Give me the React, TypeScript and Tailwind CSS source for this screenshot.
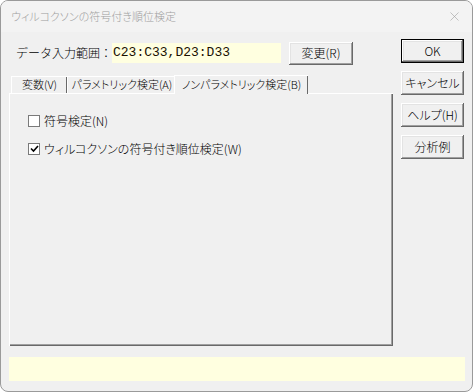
import * as React from 'react'
import {X} from 'lucide-react'

const jp = "[font-family:'Noto_Sans_CJK_JP',sans-serif] [font-feature-settings:'palt'] font-light"

const raised =
  'shadow-[inset_-1px_-1px_#696969,inset_1px_1px_#ffffff,inset_-2px_-2px_#a0a0a0,inset_2px_2px_#e3e3e3]'

const Button = ({label, def = false, className = ''}: {label: string; def?: boolean; className?: string}) => (
  <div
    className={`flex items-center justify-center bg-[#f0f0f0] text-[12px] text-black ${
      def ? 'border border-black' : ''
    } ${className}`}
  >
    <div className={`w-full h-full flex items-center justify-center ${raised}`}>{label}</div>
  </div>
)

const Tab = ({label, width, selected = false}: {label: string; width: string; selected?: boolean}) => (
  <div
    className={`${width} flex items-start justify-center whitespace-nowrap text-[11px] text-black bg-[#f0f0f0] border-t border-l border-white shadow-[inset_-1px_0_#696969] ${
      selected ? 'h-[19px] pt-[2px] relative z-10 mb-[-1px] -ml-[2px]' : 'h-[17px] pt-[1px]'
    }`}
  >
    <span className="leading-[13px]">{label}</span>
  </div>
)

const Check = ({label, checked}: {label: string; checked: boolean}) => (
  <div className="flex items-center h-[14px]">
    <div className="w-[12px] h-[12px] bg-white border border-[#7a7a7a] flex items-center justify-center">
      {checked && (
        <svg width="9" height="8" viewBox="0 0 9 8">
          <path d="M1 3.5 L3.5 6 L8 1" stroke="#000" strokeWidth="1.6" fill="none" />
        </svg>
      )}
    </div>
    <span className="ml-[4px] text-[12px] text-black leading-[14px]">{label}</span>
  </div>
)

export default function App() {
  return (
    <div
      className={`w-[473px] h-[392px] bg-[#f0f0f0] border border-[#9a9a9a] rounded-[8px] flex flex-col overflow-hidden ${jp}`}
    >
      <div className="h-[31px] flex items-center justify-between pl-[10px] pr-[10px] bg-[#f3f3f3]">
        <span className="text-[11px] text-[#a0a0a0]">ウィルコクソンの符号付き順位検定</span>
        <X size={15} strokeWidth={1} color="#a0a0a0" />
      </div>

      <div className="flex pl-[8px] pt-[9px]">
        <div className="w-[384px] flex flex-col">
          <div className="flex items-center h-[24px]">
            <span className="ml-[7px] w-[96px] text-[12px] text-black whitespace-nowrap [font-feature-settings:normal]">
              データ入力範囲：
            </span>
            <div className="w-[169px] h-[20px] bg-[#ffffe0] flex items-center pl-[1px]">
              <span className="[font-family:'Liberation_Mono',monospace] text-[13px] text-[#1a1000]">
                C23:C33,D23:D33
              </span>
            </div>
            <Button label="変更(R)" className="ml-[8px] w-[64px] h-[23px]" />
          </div>

          <div className="flex items-end h-[19px] mt-[9px] pl-[2px]">
            <Tab label="変数(V)" width="w-[56px]" />
            <Tab label="パラメトリック検定(A)" width="w-[109px]" />
            <Tab label="ノンパラメトリック検定(B)" width="w-[134px]" selected />
          </div>

          <div className="h-[253px] border-t border-l border-white shadow-[inset_-1px_-1px_#696969,inset_-2px_-2px_#a0a0a0] flex flex-col gap-[14px] pl-[18px] pt-[20px]">
            <Check label="符号検定(N)" checked={false} />
            <Check label="ウィルコクソンの符号付き順位検定(W)" checked />
          </div>
        </div>

        <div className="ml-[8px] flex flex-col gap-[8px] -mt-[2px]">
          <Button label="OK" def className="w-[63px] h-[24px]" />
          <Button label="キャンセル" className="w-[63px] h-[24px]" />
          <Button label="ヘルプ(H)" className="w-[63px] h-[24px]" />
          <Button label="分析例" className="w-[63px] h-[24px]" />
        </div>
      </div>

      <div className="mt-[11px] ml-[8px] mr-[7px] h-[24px] bg-[#ffffe0]" />
    </div>
  )
}
